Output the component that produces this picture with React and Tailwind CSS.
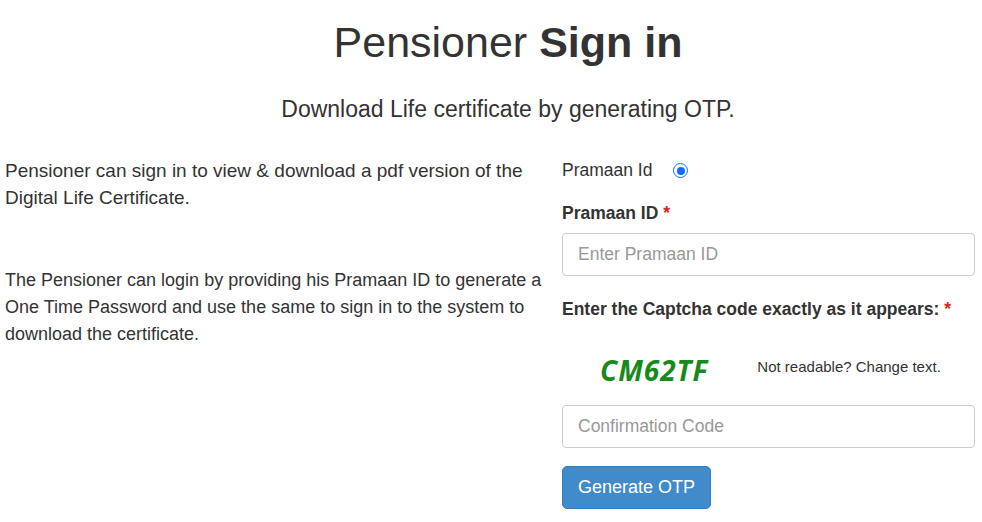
import React, { useState } from 'react';

const App = () => {
  const [pramaanId, setPramaanId] = useState('');
  const [code, setCode] = useState('');

  return (
    <div className="min-h-[522px] bg-white text-[#333]" style={{ fontFamily: '"Liberation Sans", Arial, sans-serif' }}>
      <div className="pl-[34px] text-center">
        <h1 className="pt-[16px] text-[43px] leading-[52px] font-normal">
          Pensioner <b className="font-bold">Sign in</b>
        </h1>
        <p className="mt-[27px] text-[23px] leading-[28px]">Download Life certificate by generating OTP.</p>
      </div>

      <div className="mt-[34px] flex">
        <div className="w-[562px] pl-[5px] pr-[20px] leading-[27px]">
          <p className="text-[19px]">Pensioner can sign in to view &amp; download a pdf version of the Digital Life Certificate.</p>
          <p className="mt-[56px] text-[18px]">
            The Pensioner can login by providing his Pramaan ID to generate a One Time Password and use the same to
            sign in to the system to download the certificate.
          </p>
        </div>

        <div className="w-[413px]">
          <label className="flex items-center gap-[21px] text-[17.5px] leading-[27px]">
            Pramaan Id
            <span className="flex h-[15px] w-[15px] items-center justify-center rounded-full border-[1.5px] border-[#0d6efd]">
              <span className="h-[8px] w-[8px] rounded-full bg-[#0d6efd]" />
            </span>
          </label>

          <div className="mt-[16px] text-[17.5px] font-bold leading-[27px]">
            Pramaan ID <span className="text-[#e02020]">*</span>
          </div>
          <input
            value={pramaanId}
            onChange={(e) => setPramaanId(e.target.value)}
            placeholder="Enter Pramaan ID"
            className="mt-[6px] h-[43px] w-full rounded-[4px] border border-[#ccc] px-[15px] text-[17.5px] outline-none placeholder:text-[#999]"
          />

          <div className="mt-[20px] text-[17.5px] font-bold leading-[27px]">
            Enter the Captcha code exactly as it appears: <span className="text-[#e02020]">*</span>
          </div>

          <div className="mt-[29px] flex items-center">
            <span
              className="ml-[38px] text-[28px] font-bold italic leading-[36px] tracking-[1px] text-[#178a1b]"
              style={{ fontFamily: '"Open Sans", "DejaVu Sans", sans-serif' }}
            >
              CM62TF
            </span>
            <span className="ml-[49px] -mt-[6px] text-[15px] text-[#333]">Not readable? Change text.</span>
          </div>

          <input
            value={code}
            onChange={(e) => setCode(e.target.value)}
            placeholder="Confirmation Code"
            className="mt-[17px] h-[43px] w-full rounded-[4px] border border-[#ccc] px-[15px] text-[17.5px] outline-none placeholder:text-[#999]"
          />

          <button className="mt-[18px] h-[43px] rounded-[5px] border border-[#357ebd] bg-[#428bca] px-[15px] text-[18px] text-white">
            Generate OTP
          </button>
        </div>
      </div>
    </div>
  );
};

export default App;
